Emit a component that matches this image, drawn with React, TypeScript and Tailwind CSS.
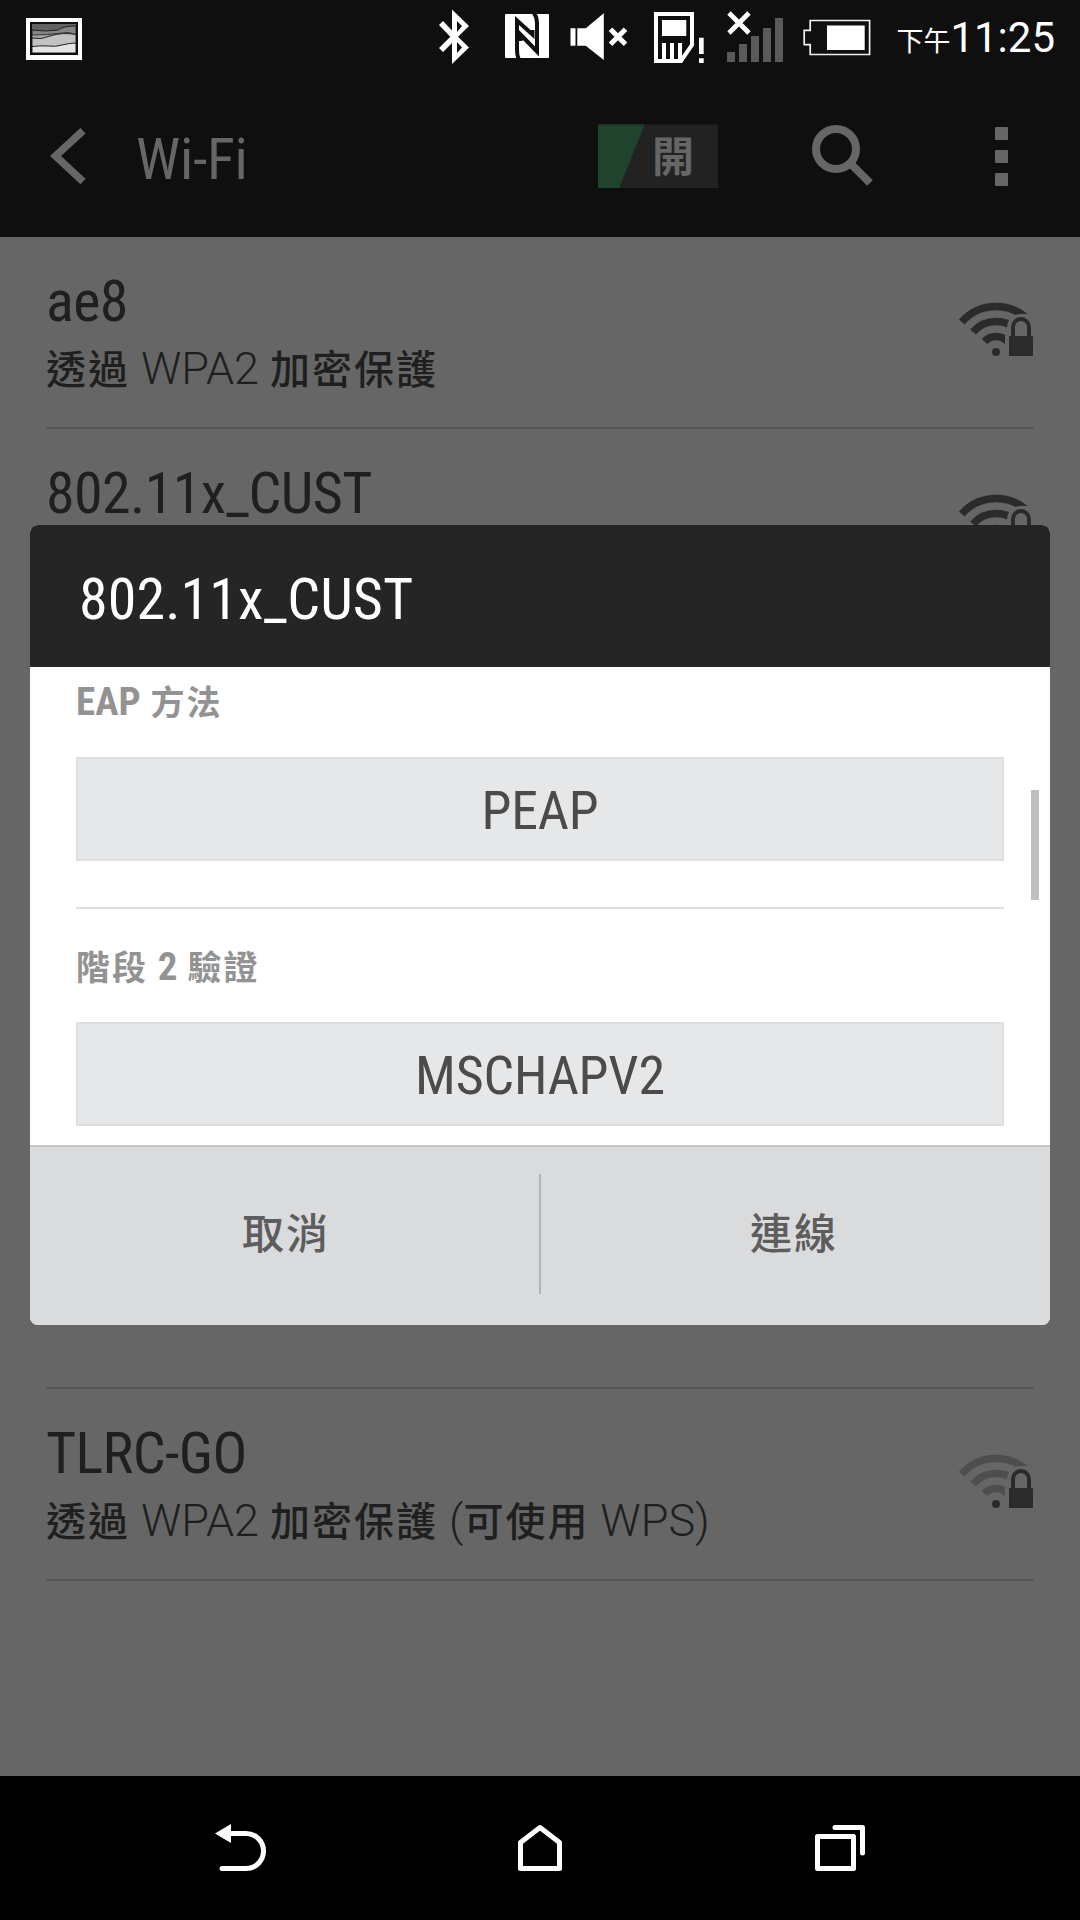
import type { ReactNode } from "react";

const condensed = "font-['Roboto_Condensed','Noto_Sans_CJK_TC',sans-serif]";

function PhotoIcon() {
  return (
    <svg className="mt-[18px] ml-[26px] w-[56px] h-[42px]" viewBox="0 0 56 42">
      <rect width="56" height="42" fill="#fff" />
      <rect x="4" y="4" width="48" height="33" fill="#0f0f0f" />
      <rect x="6" y="6" width="44" height="29" fill="#636363" />
      <path d="M6 12q14 2 26 0 5-4 18-4V35H6z" fill="#858585" stroke="#222" strokeWidth="1" />
      <path d="M6 17q16 0 30-2 8-2 14 2V35H6z" fill="#a5a5a5" stroke="#333" strokeWidth="1" />
      <path d="M6 20q10 2 18-2 12-4 26-1.500V35H6z" fill="#c2c2c2" stroke="#222" strokeWidth="1" />
      <path d="M6 28.500q8-1 16-.5 8 1 14-1 8-2 14-2V35H6z" fill="#e4e4e4" stroke="#222" strokeWidth="1" />
      <rect x="5" y="5" width="46" height="31" fill="none" stroke="#0f0f0f" strokeWidth="2" />
    </svg>
  );
}

function BluetoothIcon() {
  return (
    <svg className="mt-[9px] w-[32px] h-[56px]" viewBox="0 0 32 56">
      <path
        fill="#fff"
        fillRule="evenodd"
        d="M14 .5 31 17 20 27.700 31 38.500 14 55V34L5 43 1 39 12.300 27.700 1 16 5 12 14 21.500zM19 12v11l5-6zM19 33v11l5-5.500z"
      />
    </svg>
  );
}

function NfcIcon() {
  return (
    <svg className="mt-[14px] ml-[35px] w-[44px] h-[44px]" viewBox="0 0 44 44">
      <rect width="44" height="44" rx="1" fill="#fff" />
      <path d="M14 45.500Q12 42 12 36V6.500L27.500 20.500V16" fill="none" stroke="#0f0f0f" strokeWidth="4" />
      <path d="M15.500 27V20.500L32 37.500V9Q32 3 29-1" fill="none" stroke="#0f0f0f" strokeWidth="4" />
    </svg>
  );
}

function MuteIcon() {
  return (
    <svg className="mt-[13px] ml-[21px] w-[58px] h-[48px]" viewBox="0 0 58 48">
      <path d="M.5 15.300h5v17.400h-5zM7.300 15.300h8.500L33.800.3v46.700L15.800 32.700H7.300z" fill="#fff" />
      <path d="m40.500 16.200 15 15m0-15-15 15" stroke="#fff" strokeWidth="5" />
    </svg>
  );
}

function SimIcon() {
  return (
    <svg className="mt-[12px] ml-[26px] w-[50px] h-[51px]" viewBox="0 0 50 51">
      <path d="M2 2h36v31L27 49H2z" fill="none" stroke="#fff" strokeWidth="4" />
      <path d="M8 8h24.300v16H8zM8 31h4v18H8zM16 31h4v18h-4zM24 31h4v18h-4zM45 25.700h4.700V42H45zM45 46.300h4.700V51H45z" fill="#fff" />
    </svg>
  );
}

function SignalIcon() {
  return (
    <svg className="mt-[11px] ml-[23px] w-[56px] h-[51px]" viewBox="0 0 56 51">
      <path d="M0 41h8v10H0zM12 33h8v18h-8zM24 25h8v26h-8zM36 17h8v34h-8zM48 7h8v44h-8z" fill="#5a5a5a" />
      <path d="m2 2 20 20M22 2 2 22" stroke="#fff" strokeWidth="4.800" />
    </svg>
  );
}

function BatteryIcon() {
  return (
    <svg className="mt-[19px] ml-[20px] w-[68px] h-[37px]" viewBox="0 0 68 37">
      <path d="M7.200 1.500h59.400v34H7.200V25.700H1.200V11.300h6z" fill="none" stroke="#f0f0f0" strokeWidth="1.700" />
      <path d="M24 6.500h37.700v24.500H24z" fill="#fff" />
    </svg>
  );
}

function StatusBar() {
  return (
    <div className="flex items-start h-[75px] text-white">
      <PhotoIcon />
      <div className="flex items-start ml-auto pr-[25px]">
        <BluetoothIcon />
        <NfcIcon />
        <MuteIcon />
        <SimIcon />
        <SignalIcon />
        <BatteryIcon />
        <div className="flex items-baseline ml-[25px] mt-[13px] font-['Roboto','Noto_Sans_CJK_TC',sans-serif]">
          <span className="text-[27px] leading-[50px] -translate-y-px">下午</span>
          <span className="text-[42px] leading-[50px]">11:25</span>
        </div>
      </div>
    </div>
  );
}

function ActionBar() {
  return (
    <div className="flex items-start h-[162px] text-[#666]">
      <svg className="mt-[53px] ml-[49px] w-[37px] h-[57px]" viewBox="0 0 37 57">
        <path d="M34 2.700 6.500 28 34 53.500" fill="none" stroke="#666" strokeWidth="7.500" />
      </svg>
      <h1 className={`${condensed} mt-[52px] ml-[50px] text-[58px] leading-[64px] tracking-[-0.3px]`}>Wi-Fi</h1>
      <div className="flex items-start ml-auto">
        <div className="flex items-start justify-end mt-[49px] w-[120px] h-[64px] pr-[24px] bg-[linear-gradient(112deg,#20432e_43px,#222_44px)] shadow-[inset_0_2px_0_rgba(0,0,0,0.2)]">
          <span className="font-['Noto_Sans_CJK_TC',sans-serif] text-[42px] leading-[60px] font-bold">開</span>
        </div>
        <svg className="mt-[50px] ml-[94px] w-[62px] h-[62px]" viewBox="0 0 62 62">
          <circle cx="24" cy="24" r="20" fill="none" stroke="#666" strokeWidth="8" />
          <path d="m38 38 20 20" stroke="#666" strokeWidth="8" />
        </svg>
        <div className="flex flex-col gap-[10px] mt-[52px] ml-[121px] mr-[72px]">
          <i className="w-[13px] h-[13px] rounded-[1px] bg-[#666]" />
          <i className="w-[13px] h-[13px] rounded-[1px] bg-[#666]" />
          <i className="w-[13px] h-[13px] rounded-[1px] bg-[#666]" />
        </div>
      </div>
    </div>
  );
}

function WifiLockIcon({ weak }: { weak?: boolean }) {
  return (
    <svg className="mt-[65px] w-[75px] h-[55px]" viewBox="0 0 75 55">
      <g fill="none" stroke={weak ? "#4e4e4e" : "#2b2b2b"} strokeWidth="7.500">
        <path d="M2.700 20.100A45.500 45.500 0 0 1 71.300 20.100" />
        <path d="M14 30A30.500 30.500 0 0 1 60 30" />
        <path d="M25.500 39.500A15.500 15.500 0 0 1 48.500 39.500" />
      </g>
      <path d="M46 60V28H48V26a14 14 0 0 1 14-14H75V60z" fill="#666" />
      <circle cx="37" cy="50" r="4" fill="#2b2b2b" />
      <path d="M54 35V25a8 8 0 0 1 16 0v10" fill="none" stroke="#2b2b2b" strokeWidth="4" />
      <rect x="50" y="34" width="24" height="20" rx="1" fill="#2b2b2b" />
    </svg>
  );
}

function NetworkRow({ name, weak, children }: { name: string; weak?: boolean; children?: ReactNode }) {
  return (
    <div className="flex items-start justify-between h-[192px] mx-[46px] border-b-2 border-[#595959] text-[#1f1f1f]">
      <div className="pt-[32px]">
        <p className={`${condensed} text-[58px] leading-[64px] tracking-[-0.6px]`}>{name}</p>
        <p className="mt-[4px] font-['Noto_Sans_CJK_TC',sans-serif] font-medium text-[40px] leading-[60px] tracking-[2px] whitespace-pre">
          {children}
        </p>
      </div>
      <WifiLockIcon weak={weak} />
    </div>
  );
}

function Latin({ children }: { children: ReactNode }) {
  return <span className="font-['Roboto',sans-serif] font-light text-[45px] leading-none tracking-normal">{children}</span>;
}

function Field({ label, value }: { label: ReactNode; value: string }) {
  return (
    <>
      <div className={`${condensed} h-[60px] text-[34px] leading-[60px] tracking-[2px] font-bold text-[#939393] whitespace-pre`}>
        {label}
      </div>
      <div
        className={`${condensed} flex justify-center mt-[24px] h-[104px] border-2 border-[#dddede] bg-[#e6e7e9] text-[54px] leading-[104px] tracking-[-0.2px] text-[#4b4b4b]`}
      >
        {value}
      </div>
    </>
  );
}

function Dialog() {
  return (
    <div className="absolute left-[30px] top-[525px] w-[1020px] h-[800px] flex flex-col rounded-[8px] overflow-hidden bg-white">
      <h2 className={`${condensed} shrink-0 h-[142px] pt-[42px] pl-[49px] bg-[#252525] text-white text-[58px] leading-[64px] tracking-[0.1px]`}>
        802.11x_CUST
      </h2>
      <div className="flex h-[478px]">
        <div className="w-[928px] ml-[46px]">
          <div className="pt-[6px] pb-[46px] border-b-2 border-[#dddede]">
            <Field
              label={
                <>
                  <span className="text-[39px] leading-none tracking-normal">EAP</span> 方法
                </>
              }
              value="PEAP"
            />
          </div>
          <div className="pt-[29px]">
            <Field
              label={
                <>
                  階段 <span className="text-[39px] leading-none tracking-normal">2</span> 驗證
                </>
              }
              value="MSCHAPV2"
            />
          </div>
        </div>
        <div className="mt-[123px] ml-[27px] w-[8px] h-[110px] bg-[#bfbfbf]" />
      </div>
      <div className="flex items-center h-[180px] pb-[4px] border-t-2 border-[#c4c5c7] bg-[#dadbdd] font-['Noto_Sans_CJK_TC',sans-serif] text-[42px] font-medium tracking-[2px] text-[#5d5d5d]">
        <button className="flex-1 pb-[8px] pl-[3px]">取消</button>
        <div className="w-[2px] h-[120px] bg-[#b3b4b5]" />
        <button className="flex-1 pb-[8px] pr-[3px]">連線</button>
      </div>
    </div>
  );
}

function NavBar() {
  return (
    <div className="flex items-start justify-between h-[144px] pt-[46px] px-[213px] bg-black">
      <svg className="w-[54px] h-[52px]" viewBox="0 0 54 52">
        <path d="M9 46.500H33a17.500 17.500 0 0 0 0-35H16" fill="none" stroke="#fff" strokeWidth="5" strokeLinecap="round" />
        <path d="M2 11.500 18 2v19z" fill="#fff" />
      </svg>
      <svg className="w-[46px] h-[52px]" viewBox="0 0 46 52">
        <path d="M3.500 20.500 23 5.500 42.500 20.500v26h-39z" fill="none" stroke="#fff" strokeWidth="5" strokeLinejoin="round" />
      </svg>
      <svg className="w-[54px] h-[52px]" viewBox="0 0 54 52">
        <path d="M4.500 14.500h36v32h-36z" fill="none" stroke="#fff" strokeWidth="5" strokeLinejoin="round" />
        <path d="M22 5.500h27.500V31" fill="none" stroke="#fff" strokeWidth="5" strokeLinecap="round" strokeLinejoin="round" />
      </svg>
    </div>
  );
}

export default function App() {
  return (
    <div className="relative flex flex-col w-[1080px] h-[1920px] overflow-hidden bg-[#666]">
      <div className="bg-[#0f0f0f]">
        <StatusBar />
        <ActionBar />
      </div>
      <div className="flex-1">
        <NetworkRow name="ae8">
          透過<Latin> WPA2 </Latin>加密保護
        </NetworkRow>
        <NetworkRow name="802.11x_CUST" />
        {/* rows fully covered by the dialog */}
        <div className="h-[768px] mx-[46px] border-b-2 border-[#595959]" />
        <NetworkRow name="TLRC-GO" weak>
          透過<Latin> WPA2 </Latin>加密保護<Latin> (</Latin>可使用<Latin> WPS)</Latin>
        </NetworkRow>
      </div>
      <NavBar />
      <Dialog />
    </div>
  );
}
